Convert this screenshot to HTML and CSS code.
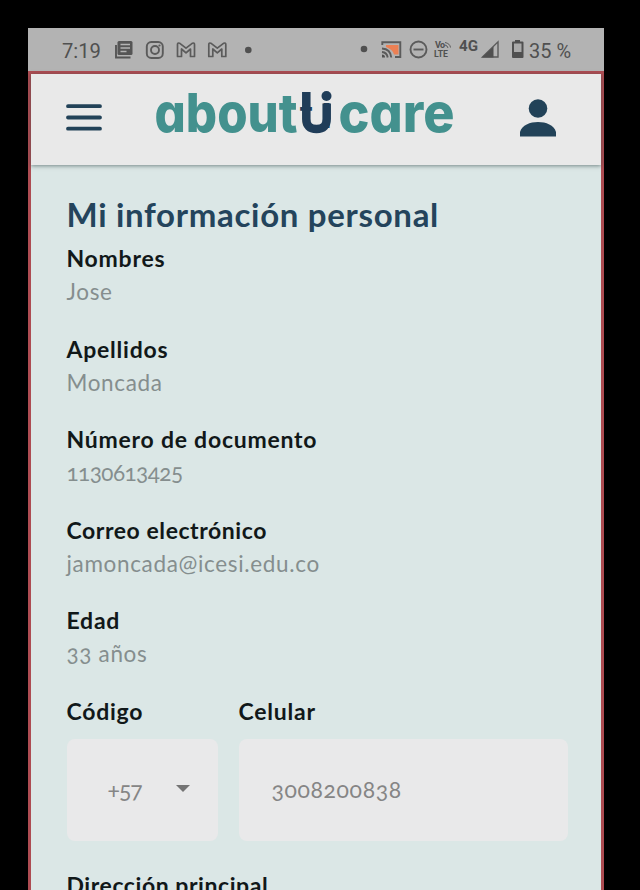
FILE: index.html
```html
<!DOCTYPE html>
<html lang="es">
<head>
<meta charset="utf-8">
<title>Mi información personal</title>
<link rel="stylesheet" href="styles.css">
</head>
<body>
<div class="phone">
  <div class="status">
    <svg width="576" height="43" viewBox="28 28 576 43">
      <g class="status-text">
        <text x="62" y="57.5" font-size="20" textLength="39" lengthAdjust="spacingAndGlyphs">7:19</text>
        <text x="435" y="48" font-size="9" font-weight="700" textLength="10">Vo</text>
        <text x="434" y="56.5" font-size="9" font-weight="700" textLength="14" lengthAdjust="spacingAndGlyphs">LTE</text>
        <text x="459" y="51" font-size="14" font-weight="700" textLength="19" lengthAdjust="spacingAndGlyphs">4G</text>
        <text x="529" y="57.5" font-size="20" textLength="42" lengthAdjust="spacingAndGlyphs">35 %</text>
      </g>
      <path d="M116 45v12.500h14.500" fill="none" stroke="#555" stroke-width="1.900"/>
      <rect x="117.500" y="41" width="15" height="14" rx="1.500" fill="#555"/>
      <path d="M120.500 44.500h9.500M120.500 48h9.500M120.500 51.500h6" stroke="#b3b3b3" stroke-width="1.300"/>
      <g fill="none" stroke="#5b5b5b" stroke-width="1.900">
        <rect x="146.800" y="42" width="16" height="16" rx="4.500"/>
        <circle cx="155" cy="50" r="4"/>
        <path id="mail" stroke-width="1.700" stroke-linejoin="round" d="M177.500 56V44.500q0-2 2-1.300l6.500 5 6.500-5q2-.7 2 1.300V56.500h-4V49l-4.500 3.800-4.500-3.800v7.500h-4z"/>
        <use href="#mail" x="31.300"/>
      </g>
      <circle cx="159.500" cy="45.500" r="1.100" fill="#5b5b5b"/>
      <circle cx="248.300" cy="50" r="3.300" fill="#505050"/>
      <circle cx="364" cy="49" r="3.300" fill="#505050"/>
      <path d="M386 45h12.500v9.500H394q-1-5-8-7.500z" fill="#ec8054"/>
      <g fill="none" stroke="#5b5b5b" stroke-width="1.900">
        <path d="M382.300 45v-2.700h18V57H395M382 48.500q8.500.5 9.300 9M382 52q5 .5 5.700 5.500"/>
        <circle cx="418.500" cy="49.500" r="8"/>
        <path d="M413.500 49.500h10"/>
        <path stroke-width="1" d="M445 42.500q5 1 5.500 5M445 45q2.500.5 3 3"/>
        <path stroke-width="1.400" d="M482.500 57L498 41.800V57z"/>
      </g>
      <path d="M382 54.500a3 3 0 0 1 3 3h-3z" fill="#505050"/>
      <path d="M482 57.500l11.500-11v11z" fill="#505050"/>
      <path d="M515 40h5v1.500h2.500q1 0 1 1V57q0 1-1 1h-9.500q-1 0-1-1V42.500q0-1 1-1h2z" fill="#505050"/>
      <path d="M514 43.500h7.500V52H514z" fill="#aaa"/>
    </svg>
  </div>
  <div class="screen">
    <header class="bar">
      <svg class="menu" width="36" height="28" viewBox="0 0 36 28"><path d="M2 2.200h32M2 13.500h32M2 24.700h32" fill="none" stroke="#224258" stroke-width="3.800" stroke-linecap="round"/></svg>
      <svg class="logo" width="310" height="76" viewBox="150 75 310 76">
        <g class="logo-text">
          <text x="154.500" y="132" textLength="143" lengthAdjust="spacingAndGlyphs">about</text>
          <text x="338.500" y="132" textLength="116" lengthAdjust="spacingAndGlyphs">care</text>
          <text class="accent" y="128"><tspan x="299.800">t</tspan><tspan class="tall" x="320.600">i</tspan></text>
        </g>
        <path d="M306.300 92v27q0 10 10.200 10t10.200-10v-15.500" fill="none" stroke="#203d59" stroke-width="8.500"/>
        <circle cx="326.500" cy="96" r="5" fill="#203d59"/>
      </svg>
      <svg class="user" width="36" height="38" viewBox="0 0 36 38"><circle cx="18" cy="9.500" r="9.300" fill="#224258"/><path d="M0 37.500V33C2 26 10 23 18 23s16 3 18 10v4.500z" fill="#224258"/></svg>
    </header>
    <main class="content">
      <h1 class="title">Mi información personal</h1>
      <dl class="fields">
        <div class="field"><dt>Nombres</dt><dd>Jose</dd></div>
        <div class="field"><dt>Apellidos</dt><dd>Moncada</dd></div>
        <div class="field"><dt>Número de documento</dt><dd class="numeric">1130613425</dd></div>
        <div class="field"><dt class="tight">Correo electrónico</dt><dd>jamoncada@icesi.edu.co</dd></div>
        <div class="field"><dt>Edad</dt><dd>33 años</dd></div>
      </dl>
      <div class="phone-row">
        <div><div class="label">Código</div><div class="input code"><span>+57</span><i class="caret"></i></div></div>
        <div><div class="label">Celular</div><div class="input number">3008200838</div></div>
      </div>
      <div class="label address tight">Dirección principal</div>
    </main>
  </div>
</div>
</body>
</html>
```
FILE: styles.css
```css
* { box-sizing: border-box; }
html, body { margin: 0; height: 890px; overflow: hidden; background: #000; }
body { padding: 28px 36px 0 28px; font-family: Lato, "Open Sans", sans-serif; font-variant-numeric: oldstyle-nums; }
svg { display: block; flex: none; }
.phone { height: 862px; background: #b3b3b3; overflow: hidden; }
.status { height: 43px; }
.status-text { font-family: Roboto, sans-serif; fill: #505050; font-variant-numeric: normal; }
.screen { height: 840px; border: 3px solid #ad4c52; background: #dbe7e6; }
.bar { height: 91px; padding: 0 45px 0 35px; display: flex; justify-content: space-between; background: #e9e9e9; box-shadow: 0 1px 4px rgba(50, 70, 70, .6); }
.menu { margin-top: 30px; }
.logo { margin: 1px 0 0 -12px; }
.user { margin-top: 25px; }
.logo-text { font-family: Inter, sans-serif; font-size: 54px; font-weight: 800; font-feature-settings: "cv11"; fill: #43918e; }
.logo-text .accent { font-size: 38px; font-weight: 600; fill: #203d59; }
.logo-text .tall { font-size: 46px; }
.content { padding: 30px 34px 0 35.500px; }
.title { margin: 0; height: 47px; font-size: 33px; line-height: 39px; font-weight: 700; color: #24445c; letter-spacing: .690px; }
.fields { margin: 0; }
.field { height: 90.600px; }
dt, dd, .label { margin: 0; font-size: 22px; line-height: 33px; white-space: nowrap; }
dt, .label { font-size: 23px; font-weight: 700; color: #111819; letter-spacing: .760px; }
.tight { letter-spacing: .560px; }
dd { font-size: 22.500px; color: #858e8e; letter-spacing: .660px; }
dd.numeric { letter-spacing: -.550px; }
.phone-row { display: grid; grid-template-columns: 151px 329px; column-gap: 21px; }
.input { margin-top: 11px; padding-bottom: 2px; height: 102px; border-radius: 8px; background: #e9e9ea; display: flex; align-items: center; font-size: 23px; color: #858585; }
.code { padding-left: 41px; padding-right: 28px; justify-content: space-between; letter-spacing: -1px; }
.number { padding-left: 33px; letter-spacing: .600px; }
.caret { border: 7px solid transparent; border-top-color: #747474; border-bottom: 0; }
.address { margin-top: 28px; }
```
